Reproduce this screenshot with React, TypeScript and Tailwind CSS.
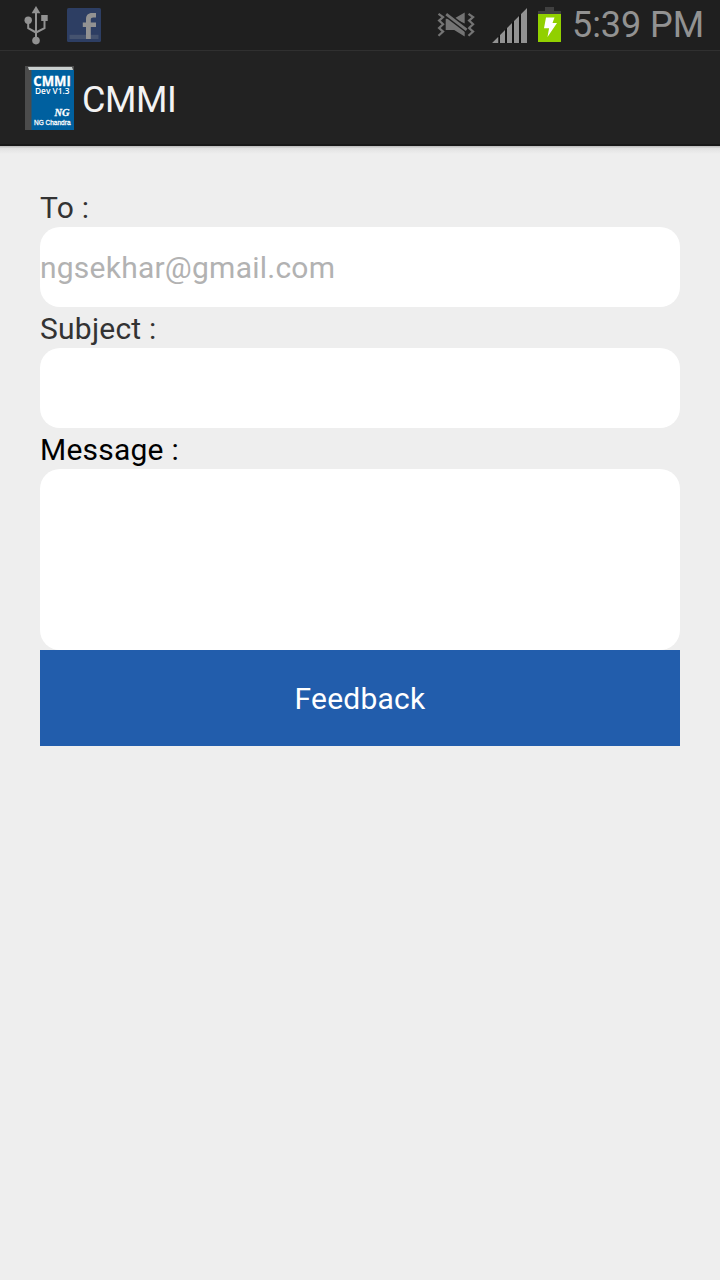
const UsbIcon = () => (
  <svg width="24" height="40" viewBox="0 0 24 40" fill="none" stroke="#929292" strokeWidth="2">
    <path d="M12 6v28M4.2 15v7.2l7.8 4.3M20.5 14v8.2L12 26.5" />
    <path d="M12 0l4.4 7.2H7.6z" fill="#929292" stroke="none" />
    <circle cx="4.2" cy="14.2" r="3.7" fill="#929292" stroke="none" />
    <path d="M17.2 9h6.5v6h-6.5z" fill="#929292" stroke="none" />
    <circle cx="12" cy="34.6" r="3.8" fill="#929292" stroke="none" />
  </svg>
);

const FacebookIcon = () => (
  <svg width="34" height="34" viewBox="0 0 34 34">
    <rect width="34" height="34" rx="1.5" fill="#2d3e63" />
    <rect x="2.5" y="26.8" width="29" height="4.2" fill="#45536f" />
    <path d="M19 31V19h-3.2v-4.5H19v-3.2c0-4.2 2.3-6.3 6-6.3h4v4.4h-2.8c-1.6 0-2.4.7-2.4 2.3v2.8h5.2V19h-5.2v12z" fill="#929292" />
  </svg>
);

const MuteIcon = () => (
  <svg width="38" height="26" viewBox="0 0 38 26" fill="none" stroke="#747474" strokeWidth="2.2">
    <path d="M1.5 1.8l4.6 3.3-4 3.5 4 3.7-4 3.7 4 3.6-4.6 4.2" />
    <path d="M31.5 1.8l4.6 3.3-4 3.5 4 3.7-4 3.7 4 3.6-4.6 4.2" />
    <path d="M8.7 6.8h3l16 12.4v5.4L17.2 18H8.7z" fill="#747474" stroke="none" />
    <path d="M27.7.6v10.8L17.3 6.6z" fill="#747474" stroke="none" />
    <path d="M9.2 2.2l20.4 15.6" stroke="#1f1f1f" strokeWidth="5.6" />
    <path d="M9.2 2.2l20.4 15.6" strokeWidth="2.8" />
  </svg>
);

const SignalIcon = () => (
  <svg width="36" height="36" viewBox="0 0 36 36">
    <path d="M0 36L35 1v35z" fill="#111" />
    <path d="M0 36l6.3-6.3V36zM8 36v-8l5-5v13zM15 36V21l5-5v20zM22 36V14l5-5v27zM29 36V7l6-6v35z" fill="#929292" />
  </svg>
);

const BatteryIcon = () => (
  <svg width="23" height="35" viewBox="0 0 23 35">
    <path d="M7 0h9v4h7v3H0V4h7z" fill="#404040" />
    <path d="M0 7h23v28H0z" fill="#91d000" />
    <path d="M8 10.5h8.5L14.5 16H19L9.5 30l1.6-8.8H6z" fill="#fff" />
  </svg>
);

const BookIcon = () => (
  <svg width="49" height="64" viewBox="0 0 49 64" fontFamily="'Open Sans', sans-serif" fill="#fff">
    <path d="M0 0h49v64H0z" fill="#4c4c4c" />
    <path d="M3 1h44l1 3H4z" fill="#c9cfce" />
    <path d="M6.5 4H49v60H6.5z" fill="#00609f" />
    <text x="8.3" y="19.8" fontSize="13.5" fontWeight="700" stroke="#fff" strokeWidth=".3" textLength="37.5" lengthAdjust="spacingAndGlyphs">CMMI</text>
    <text x="10" y="28.3" fontSize="9.4" fontWeight="600" textLength="34.5" lengthAdjust="spacingAndGlyphs">Dev V1.3</text>
    <text x="29.5" y="49.5" fontSize="11" fontWeight="700" fontStyle="italic" fontFamily="'Liberation Serif', serif" stroke="#fff" strokeWidth=".3" textLength="15" lengthAdjust="spacingAndGlyphs">NG</text>
    <text x="9" y="59.3" fontSize="7.5" fontFamily="'Liberation Sans', sans-serif" stroke="#fff" strokeWidth=".3" textLength="36.5" lengthAdjust="spacingAndGlyphs">NG Chandra</text>
  </svg>
);

const App = () => {
  return (
    <div className="flex flex-col w-full h-screen bg-[#eeeeee] font-[Roboto,sans-serif] overflow-hidden">
      {/* Status bar */}
      <div className="flex justify-between h-[50px] shrink-0 bg-[#1f1f1f]">
        <div className="flex">
          <div className="ml-6 mt-1.5"><UsbIcon /></div>
          <div className="ml-[19px] mt-2"><FacebookIcon /></div>
        </div>
        <div className="flex">
          <div className="mt-3"><MuteIcon /></div>
          <div className="ml-[17px] mt-[7px]"><SignalIcon /></div>
          <div className="ml-2.5 mt-[7px]"><BatteryIcon /></div>
          <span className="ml-[11px] mr-4 w-[132px] text-4xl leading-[50px] tracking-[-0.05px] text-[#929292] whitespace-nowrap">5:39 PM</span>
        </div>
      </div>

      {/* Action bar */}
      <div className="flex items-start h-24 shrink-0 pl-[25px] pt-[15px] bg-[#222222] border-t border-[#303030] border-b-2 border-b-[#181818]">
        <BookIcon />
        <h1 className="ml-2 text-4xl leading-[68px] tracking-[-0.4px] text-[#f3f3f3]">CMMI</h1>
      </div>
      <div className="h-2 shrink-0 bg-linear-to-b from-[#b8b8b8] via-[#e2e2e2] via-30% to-[#eeeeee]"></div>

      {/* Feedback form */}
      <form className="flex flex-col px-10 pt-8 text-[30px] tracking-[0.23px] text-[#333333]">
        <label htmlFor="to" className="h-[41px] leading-[43px]">To :</label>
        <input id="to" type="email" className="h-20 w-full rounded-[20px] bg-white placeholder:text-[#b2b2b2] outline-none" placeholder="ngsekhar@gmail.com" />
        <label htmlFor="subject" className="h-[41px] leading-[43px]">Subject :</label>
        <input id="subject" type="text" className="h-20 w-full rounded-[20px] bg-white outline-none" />
        <label htmlFor="message" className="h-[41px] leading-[43px] text-black">Message :</label>
        <textarea id="message" className="h-[181px] w-full rounded-[20px] bg-white outline-none resize-none"></textarea>
        <button type="button" className="h-24 w-full bg-[#225dac] text-white">Feedback</button>
      </form>
    </div>
  );
};

export default App;
